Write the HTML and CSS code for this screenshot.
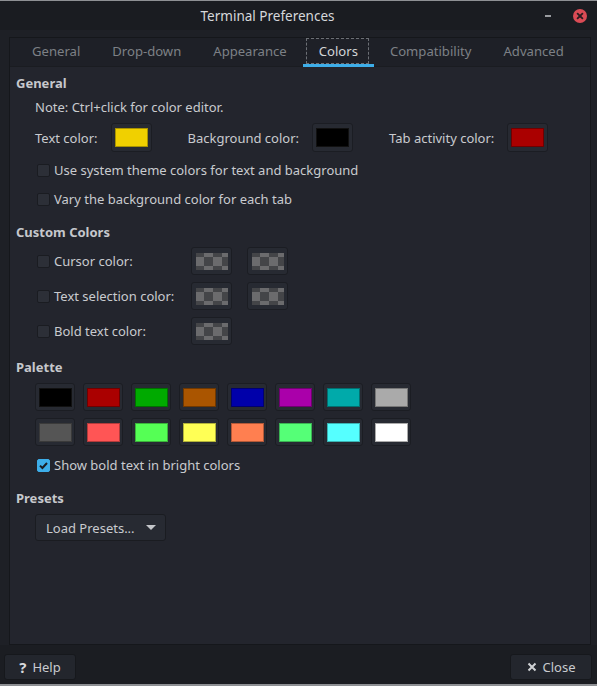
FILE: index.html
```html
<!DOCTYPE html>
<html>
<head>
<meta charset="utf-8">
<link rel="stylesheet" href="styles.css">
</head>
<body>
<div class="window">
  <div class="titlebar">
    <div class="title">Terminal Preferences</div>
    <div class="controls">
      <span class="minimize"></span>
      <span class="closebtn"><svg width="14" height="14" viewBox="0 0 14 14"><circle cx="7" cy="7" r="7" fill="#da4b55"/><path d="M4.6 4.6 L9.4 9.4 M9.4 4.6 L4.6 9.4" stroke="#2a1c20" stroke-width="1.8" stroke-linecap="round"/></svg></span>
    </div>
  </div>
  <div class="main">
    <div class="notebook">
      <div class="tabs">
        <div class="tab">General</div>
        <div class="tab">Drop-down</div>
        <div class="tab">Appearance</div>
        <div class="tab active"><span class="focus">Colors</span></div>
        <div class="tab">Compatibility</div>
        <div class="tab">Advanced</div>
      </div>
      <div class="content">
        <div class="heading h-first">General</div>
        <div class="indent note">Note: Ctrl+click for color editor.</div>
        <div class="indent colorrow">
          <span class="lbl">Text color:</span>
          <span class="swatch"><span class="chip" style="background:#f0d000;border-color:#a89200"></span></span>
          <span class="lbl">Background color:</span>
          <span class="swatch"><span class="chip" style="background:#000000;border-color:#111"></span></span>
          <span class="lbl">Tab activity color:</span>
          <span class="swatch last"><span class="chip" style="background:#aa0000;border-color:#700000"></span></span>
        </div>
        <div class="indent check c1"><span class="box"></span><span>Use system theme colors for text and background</span></div>
        <div class="indent check c2"><span class="box"></span><span>Vary the background color for each tab</span></div>

        <div class="heading h-custom">Custom Colors</div>
        <div class="indent custom">
          <div class="crow">
            <div class="check clabel"><span class="box"></span><span>Cursor color:</span></div>
            <span class="swatch"><span class="checker"></span></span>
            <span class="swatch"><span class="checker"></span></span>
          </div>
          <div class="crow">
            <div class="check clabel"><span class="box"></span><span>Text selection color:</span></div>
            <span class="swatch"><span class="checker"></span></span>
            <span class="swatch"><span class="checker"></span></span>
          </div>
          <div class="crow">
            <div class="check clabel"><span class="box"></span><span>Bold text color:</span></div>
            <span class="swatch"><span class="checker"></span></span>
          </div>
        </div>

        <div class="heading h-palette">Palette</div>
        <div class="indent palette">
          <span class="swatch"><span class="chip" style="background:#000000;border-color:#111"></span></span>
          <span class="swatch"><span class="chip" style="background:#aa0000;border-color:#700000"></span></span>
          <span class="swatch"><span class="chip" style="background:#00aa00;border-color:#007000"></span></span>
          <span class="swatch"><span class="chip" style="background:#aa5500;border-color:#703800"></span></span>
          <span class="swatch"><span class="chip" style="background:#0000aa;border-color:#000070"></span></span>
          <span class="swatch"><span class="chip" style="background:#aa00aa;border-color:#700070"></span></span>
          <span class="swatch"><span class="chip" style="background:#00aaaa;border-color:#007070"></span></span>
          <span class="swatch"><span class="chip" style="background:#aaaaaa;border-color:#777"></span></span>
          <span class="swatch"><span class="chip" style="background:#555555;border-color:#3a3a3a"></span></span>
          <span class="swatch"><span class="chip" style="background:#ff5555;border-color:#b33b3b"></span></span>
          <span class="swatch"><span class="chip" style="background:#55ff55;border-color:#3bb33b"></span></span>
          <span class="swatch"><span class="chip" style="background:#ffff55;border-color:#b3b33b"></span></span>
          <span class="swatch"><span class="chip" style="background:#ff7f50;border-color:#b35938"></span></span>
          <span class="swatch"><span class="chip" style="background:#55ff77;border-color:#3bb353"></span></span>
          <span class="swatch"><span class="chip" style="background:#55ffff;border-color:#3bb3b3"></span></span>
          <span class="swatch"><span class="chip" style="background:#ffffff;border-color:#aaa"></span></span>
        </div>
        <div class="indent check c3"><span class="box checked"><svg width="13" height="13" viewBox="0 0 13 13"><path d="M3 6.6 L5.4 9 L10 4" fill="none" stroke="#1b1d22" stroke-width="2"/></svg></span><span>Show bold text in bright colors</span></div>

        <div class="heading h-presets">Presets</div>
        <div class="indent">
          <div class="combo"><span>Load Presets...</span><span class="arrow"></span></div>
        </div>
      </div>
    </div>
  </div>
  <div class="footer">
    <div class="btn help"><span class="ico">?</span><span>Help</span></div>
    <div class="btn close"><svg width="10" height="10" viewBox="0 0 10 10"><path d="M1.5 1.5 L8.5 8.5 M8.5 1.5 L1.5 8.5" stroke="#d0d2d5" stroke-width="2"/></svg><span>Close</span></div>
  </div>
</div>
</body>
</html>
```

FILE: styles.css
```css
html, body {
  margin: 0;
  padding: 0;
  background: #1e2026;
}
body {
  font-family: "Noto Sans", "Open Sans", sans-serif;
  font-size: 13px;
  color: #c9cbcf;
  white-space: nowrap;
}
.window {
  width: 597px;
  height: 686px;
  box-sizing: border-box;
  border-top: 1px solid #8e9094;
  border-bottom: 2px solid #8e9094;
  display: flex;
  flex-direction: column;
  background: #1e2026;
}
.titlebar {
  height: 29px;
  flex: none;
  background: #1a1c21;
  display: flex;
  align-items: center;
  position: relative;
}
.title {
  flex: 1;
  text-align: center;
  padding-right: 62px;
  font-size: 13.5px;
  color: #d6d8db;
}
.controls {
  position: absolute;
  right: 0;
  top: 0;
  height: 29px;
  display: flex;
  align-items: center;
}
.minimize {
  width: 6px;
  height: 2px;
  background: #9a9ca0;
  margin-right: 22px;
}
.closebtn {
  display: flex;
  margin-right: 10px;
}
.main {
  flex: 1;
  padding: 7px 6px 0 9px;
  display: flex;
  flex-direction: column;
}
.notebook {
  flex: 1;
  border: 1px solid #15171b;
  display: flex;
  flex-direction: column;
  background: #23252d;
}
.tabs {
  height: 28px;
  flex: none;
  display: flex;
  padding-left: 6px;
  background: #1e2027;
  border-bottom: 1px solid #1a1c21;
}
.tab {
  padding: 0 16px 3px 16px;
  display: flex;
  align-items: center;
  color: #7d8086;
  font-size: 13.1px;
  position: relative;
}
.tab.active {
  color: #d2d4d7;
}
.tab.active::after {
  content: "";
  position: absolute;
  left: 0;
  right: 0;
  bottom: -1px;
  height: 3px;
  background: #3daee9;
}
.focus {
  position: relative;
}
.focus::before {
  content: "";
  position: absolute;
  left: -13px;
  right: -11px;
  top: -4px;
  bottom: -4px;
  border: 1px dashed #6c6f75;
}
.content {
  flex: 1;
  padding: 7px 6px 0 6px;
  display: flex;
  flex-direction: column;
}
.heading {
  font-weight: bold;
  height: 18px;
  line-height: 18px;
  color: #c6c8cc;
}
.h-custom { margin-top: 14px; }
.h-palette { margin-top: 13px; }
.h-presets { margin-top: 14px; }
.indent {
  margin-left: 19px;
}
.note {
  margin-top: 6px;
  height: 18px;
  line-height: 18px;
}
.colorrow {
  margin-top: 7px;
  display: flex;
  align-items: center;
}
.colorrow .lbl {
  margin-right: 13px;
}
.colorrow .swatch {
  margin-right: 36px;
  height: 29px;
}
.swatch {
  width: 41px;
  height: 28px;
  box-sizing: border-box;
  background: #272a32;
  border: 1px solid #1b1d23;
  border-radius: 3px;
  display: flex;
  align-items: center;
  justify-content: center;
  flex: none;
}
.chip {
  width: 33px;
  height: 19px;
  box-sizing: border-box;
  border: 1px solid #000;
}
.checker {
  width: 32px;
  height: 17px;
  background-color: #444548;
  background-image: conic-gradient(#6b6b6d 25%, #444548 0 50%, #6b6b6d 0 75%, #444548 0);
  background-size: 18px 18px;
  background-position: -1px -5px;
}
.check {
  display: flex;
  align-items: center;
  height: 20px;
}
.c1 { margin-top: 8px; }
.c2 { margin-top: 9px; }
.c3 { margin-top: 9px; }
.box {
  width: 13px;
  height: 13px;
  box-sizing: border-box;
  background: #2c2f37;
  border: 1px solid #1a1c21;
  border-radius: 2px;
  margin-left: 2px;
  margin-right: 4px;
  flex: none;
  display: flex;
}
.box.checked {
  background: #3daee9;
  border-color: #3daee9;
}
.box.checked svg {
  margin: -1px;
}
.custom {
  margin-top: 6px;
  display: flex;
  flex-direction: column;
  gap: 7px;
}
.crow {
  display: flex;
  align-items: center;
  gap: 15px;
}
.clabel {
  width: 141px;
  flex: none;
}
.palette {
  margin-top: 7px;
  display: grid;
  grid-template-columns: repeat(8, 40px);
  gap: 7px 8px;
}
.palette .swatch {
  width: 40px;
}
.combo {
  margin-top: 7px;
  width: 131px;
  height: 27px;
  box-sizing: border-box;
  background: #272a32;
  border: 1px solid #1a1c21;
  border-radius: 3px;
  display: flex;
  align-items: center;
  padding-left: 10px;
  color: #c9cbcf;
}
.arrow {
  margin-left: 11px;
  width: 0;
  height: 0;
  border-left: 5px solid transparent;
  border-right: 5px solid transparent;
  border-top: 5px solid #c4c6ca;
}
.footer {
  height: 39px;
  flex: none;
  box-sizing: border-box;
  padding: 9px 5px 4px 4px;
  display: flex;
  justify-content: space-between;
  background: #1b1d22;
}
.btn {
  height: 26px;
  box-sizing: border-box;
  background: #23262d;
  border: 1px solid #16181c;
  border-radius: 3px;
  display: flex;
  align-items: center;
  justify-content: center;
  color: #c9cbcf;
}
.btn.help {
  width: 72px;
  gap: 6px;
}
.help .ico {
  font-weight: bold;
  font-size: 15px;
  color: #d6d8db;
}
.btn.close {
  width: 82px;
  gap: 6px;
}
```
